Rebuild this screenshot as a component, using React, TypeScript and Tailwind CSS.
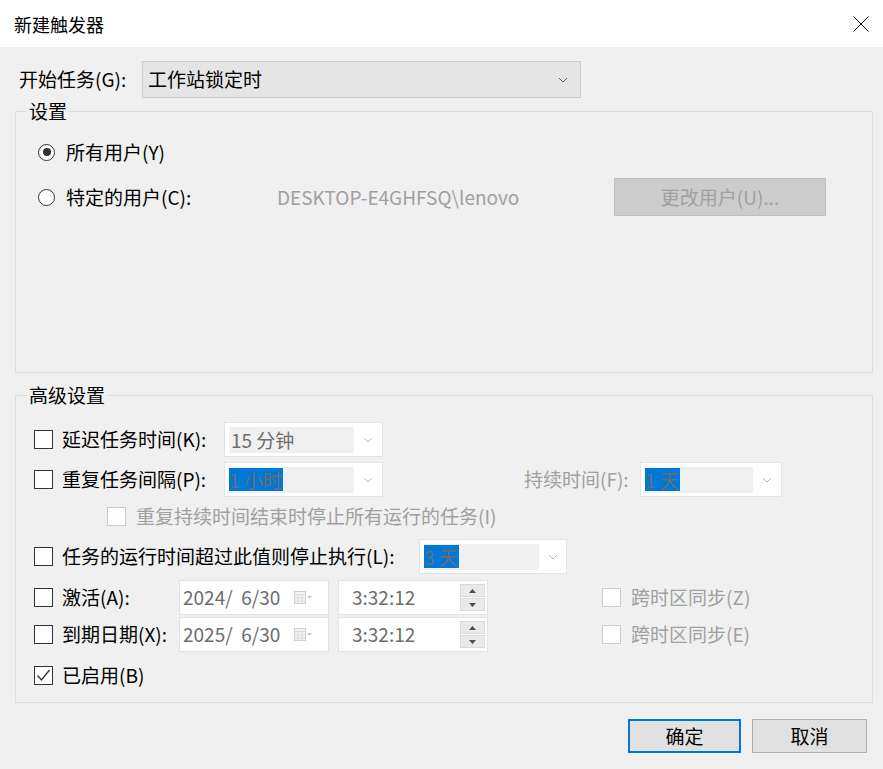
import React from "react";

const Chevron = ({ color = "#606060" }: { color?: string }) => (
  <svg width="10" height="6" viewBox="0 0 10 6" fill="none">
    <path d="M1 1l4 4 4-4" stroke={color} strokeWidth="1" />
  </svg>
);

const CheckBox = ({ checked = false, disabled = false }: { checked?: boolean; disabled?: boolean }) => (
  <div
    className={
      disabled
        ? "w-[19px] h-[19px] shrink-0 border border-[#cccccc] bg-white"
        : "w-[19px] h-[19px] shrink-0 border border-[#333333] bg-white flex items-center justify-center"
    }
  >
    {checked && (
      <svg width="15" height="13" viewBox="0 0 15 13" fill="none">
        <path d="M1.5 6.5l4 4.5 8-10" stroke="#333333" strokeWidth="1.3" />
      </svg>
    )}
  </div>
);

const Radio = ({ checked = false }: { checked?: boolean }) => (
  <div className="w-[17px] h-[17px] shrink-0 rounded-full border border-[#333333] bg-white flex items-center justify-center">
    {checked && <div className="w-[8px] h-[8px] rounded-full bg-[#333333]" />}
  </div>
);

// disabled combobox: white frame, grey edit area, chevron on the right
const DisabledCombo = ({
  value,
  width,
  inner,
  selected = false,
}: {
  value: string;
  width: string;
  inner: string;
  selected?: boolean;
}) => (
  <div className={`${width} h-[35px] shrink-0 bg-white border border-[#e3e3e3] flex items-center pl-[4px]`}>
    <div className={`${inner} h-[26px] bg-[#f0f0f0] flex items-center text-[#6d6d6d] leading-none`}>
      {selected ? (
        <span className="bg-[#0078d7] h-[23px] flex items-center pr-[1px]">{value}</span>
      ) : (
        <span className="pl-[2px]">{value}</span>
      )}
    </div>
    <div className="flex-1 flex justify-center">
      <Chevron color="#b5b5b5" />
    </div>
  </div>
);

const DateField = ({ value }: { value: string }) => (
  <div className="w-[150px] h-[35px] shrink-0 bg-white border border-[#e3e3e3] flex items-center pl-[3px] text-[#6d6d6d]">
    <span className="w-[111px] whitespace-pre">{value}</span>
    <svg width="18" height="13" viewBox="0 0 18 13" fill="none">
      <rect x="0.5" y="0.5" width="11" height="12" fill="#f4f4f4" stroke="#cfcfcf" />
      <path d="M0.5 3.5h11M4 3.5v9M8 3.5v9M0.5 7h11M0.5 10h11" stroke="#dcdcdc" />
      <path d="M13 5h5l-2.5 2.5z" fill="#c4c4c4" />
    </svg>
  </div>
);

const TimeField = ({ value }: { value: string }) => (
  <div className="w-[150px] h-[35px] shrink-0 bg-white border border-[#e3e3e3] flex items-center pl-[13px] pr-[2px] text-[#6d6d6d]">
    <span className="flex-1">{value}</span>
    <div className="flex flex-col gap-[1px]">
      <div className="w-[25px] h-[13px] bg-[#eaeaea] border border-[#dadada] flex items-center justify-center">
        <svg width="7" height="4" viewBox="0 0 7 4">
          <path d="M0 4h7L3.5 0z" fill="#4d4d4d" />
        </svg>
      </div>
      <div className="w-[25px] h-[13px] bg-[#eaeaea] border border-[#dadada] flex items-center justify-center">
        <svg width="7" height="4" viewBox="0 0 7 4">
          <path d="M0 0h7L3.5 4z" fill="#4d4d4d" />
        </svg>
      </div>
    </div>
  </div>
);

export default function App() {
  return (
    <div className="w-[883px] h-[769px] bg-[#f0f0f0] text-black text-[19px] font-['Noto_Sans_CJK_SC',sans-serif] overflow-hidden">
      {/* Title bar */}
      <div className="h-[47px] bg-white flex items-center justify-between pl-[14px] pr-[14px]">
        <span className="text-[18px] leading-none">新建触发器</span>
        <svg width="16" height="16" viewBox="0 0 16 16" fill="none">
          <path d="M0.5 0.5l15 15M15.5 0.5l-15 15" stroke="#000" strokeWidth="1" />
        </svg>
      </div>

      <div className="pl-[15px] pr-[10px]">
        {/* Start task */}
        <div className="mt-[14px] h-[37px] flex items-center">
          <span className="w-[127px] pl-[4px] shrink-0">开始任务(G):</span>
          <div className="w-[439px] h-[37px] bg-[#e5e5e5] border border-[#cccccc] flex items-center justify-between pl-[5px] pr-[12px]">
            <span>工作站锁定时</span>
            <Chevron />
          </div>
        </div>

        {/* Settings group */}
        <div className="mt-[13px] h-[262px] border border-[#dcdcdc]">
          <div className="-mt-[13px] ml-[11px] w-fit px-[2px] bg-[#f0f0f0] leading-[24px]">设置</div>
          <div className="mt-[17px] h-[24px] flex items-center pl-[22px]">
            <Radio checked />
            <span className="ml-[11px]">所有用户(Y)</span>
          </div>
          <div className="mt-[14px] h-[38px] flex items-center pl-[22px]">
            <Radio />
            <span className="ml-[11px] w-[211px] shrink-0">特定的用户(C):</span>
            <span className="w-[337px] shrink-0 text-[#a0a0a0]">DESKTOP-E4GHFSQ\lenovo</span>
            <div className="w-[212px] h-[38px] bg-[#cccccc] border border-[#bfbfbf] flex items-center justify-center text-[#a0a0a0]">
              更改用户(U)...
            </div>
          </div>
        </div>

        {/* Advanced settings group */}
        <div className="mt-[22px] h-[308px] border border-[#dcdcdc]">
          <div className="-mt-[13px] ml-[11px] w-fit px-[2px] bg-[#f0f0f0] leading-[24px]">高级设置</div>

          <div className="mt-[15px] h-[35px] flex items-center pl-[18px]">
            <CheckBox />
            <span className="ml-[9px] w-[162px] shrink-0">延迟任务时间(K):</span>
            <DisabledCombo value="15 分钟" width="w-[159px]" inner="w-[125px]" />
          </div>

          <div className="mt-[5px] h-[35px] flex items-center pl-[18px]">
            <CheckBox />
            <span className="ml-[9px] w-[162px] shrink-0">重复任务间隔(P):</span>
            <DisabledCombo value="1 小时" width="w-[159px]" inner="w-[125px]" selected />
            <span className="ml-[141px] w-[116px] shrink-0 text-[#a0a0a0]">持续时间(F):</span>
            <DisabledCombo value="1 天" width="w-[142px]" inner="w-[108px]" selected />
          </div>

          <div className="mt-[7px] h-[24px] flex items-center pl-[91px]">
            <CheckBox disabled />
            <span className="ml-[10px] text-[#a0a0a0]">重复持续时间结束时停止所有运行的任务(I)</span>
          </div>

          <div className="mt-[11px] h-[35px] flex items-center pl-[18px]">
            <CheckBox />
            <span className="ml-[9px] w-[357px] shrink-0">任务的运行时间超过此值则停止执行(L):</span>
            <DisabledCombo value="3 天" width="w-[148px]" inner="w-[115px]" selected />
          </div>

          <div className="mt-[6px] h-[35px] flex items-center pl-[18px]">
            <CheckBox />
            <span className="ml-[9px] w-[117px] shrink-0">激活(A):</span>
            <DateField value="2024/  6/30" />
            <div className="ml-[9px]">
              <TimeField value="3:32:12" />
            </div>
            <div className="ml-[114px]">
              <CheckBox disabled />
            </div>
            <span className="ml-[10px] text-[#a0a0a0]">跨时区同步(Z)</span>
          </div>

          <div className="mt-[2px] h-[35px] flex items-center pl-[18px]">
            <CheckBox />
            <span className="ml-[9px] w-[117px] shrink-0">到期日期(X):</span>
            <DateField value="2025/  6/30" />
            <div className="ml-[9px]">
              <TimeField value="3:32:12" />
            </div>
            <div className="ml-[114px]">
              <CheckBox disabled />
            </div>
            <span className="ml-[10px] text-[#a0a0a0]">跨时区同步(E)</span>
          </div>

          <div className="mt-[11px] h-[24px] flex items-center pl-[18px]">
            <CheckBox checked />
            <span className="ml-[9px]">已启用(B)</span>
          </div>
        </div>
      </div>

      {/* Buttons */}
      <div className="mt-[16px] flex justify-end gap-[11px] pr-[16px]">
        <div className="w-[113px] h-[34px] bg-[#e1e1e1] border-2 border-[#0078d7] flex items-center justify-center">
          确定
        </div>
        <div className="w-[115px] h-[34px] bg-[#e1e1e1] border border-[#adadad] flex items-center justify-center">
          取消
        </div>
      </div>
    </div>
  );
}
